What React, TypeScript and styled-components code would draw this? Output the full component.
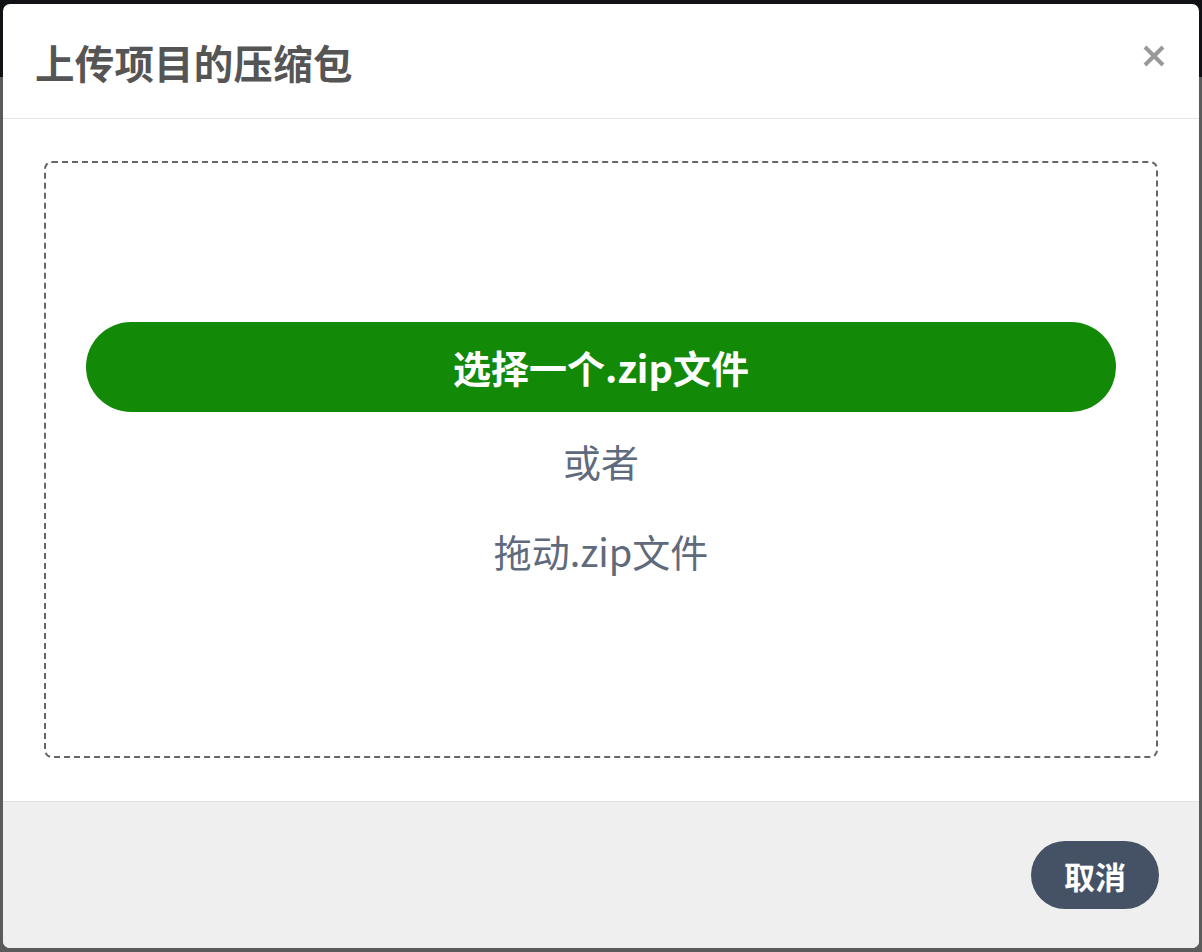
import React from 'react'
import styled, { createGlobalStyle } from 'styled-components';

const GlobalStyle = createGlobalStyle`
  html, body {
    margin: 0;
    padding: 0;
    height: 100%;
    overflow: hidden;
  }
  body {
    font-family: "Noto Sans CJK SC", "Noto Sans", sans-serif;
    background: #5b5b5b;
  }
`;

const Page = styled.div`
  position: relative;
  height: 952px;
  display: flex;
  flex-direction: column;
`;

const NavBar = styled.div`
  height: 77px;
  background: #101216;
`;

const PageRest = styled.div`
  flex: 1;
  background: #5b5b5b;
`;

const Overlay = styled.div`
  position: absolute;
  inset: 0;
  padding: 4px 3px;
  display: flex;
`;

const Modal = styled.div`
  flex: 1;
  display: flex;
  flex-direction: column;
  background: #ffffff;
  border-radius: 7px;
  overflow: hidden;
`;

const Header = styled.div`
  height: 114px;
  border-bottom: 1px solid #e5e5e5;
  display: flex;
  align-items: center;
  justify-content: space-between;
  padding: 0 33px 0 32px;
`;

const Title = styled.h2`
  margin: 0;
  font-size: 39.5px;
  font-weight: 700;
  color: #555555;
  letter-spacing: 0.2px;
`;

const CloseButton = styled.button`
  border: none;
  background: none;
  padding: 0;
  width: 24px;
  height: 24px;
  display: flex;
  align-items: center;
  justify-content: center;
  cursor: pointer;
  margin-top: -10px;
`;

const Body = styled.div`
  flex: 1;
  padding: 42px 41px 43px 41px;
  display: flex;
`;

const DropZone = styled.div`
  flex: 1;
  border: 2px dashed #666666;
  border-radius: 8px;
  display: flex;
  flex-direction: column;
  align-items: stretch;
  justify-content: center;
  padding: 0 40px 20px 40px;
`;

const PickButton = styled.button`
  height: 90px;
  border: none;
  border-radius: 45px;
  background: #138908;
  color: #ffffff;
  font-family: "Noto Sans CJK SC", "Noto Sans", sans-serif;
  font-size: 38px;
  font-weight: 700;
  cursor: pointer;
`;

const Hint = styled.div<{ $top: number }>`
  margin-top: ${(p) => p.$top}px;
  text-align: center;
  font-size: 38px;
  color: #5f6a7c;
  line-height: 54px;
`;

const Footer = styled.div`
  height: 146px;
  border-top: 1px solid #e2e2e2;
  background: #efefef;
  display: flex;
  align-items: center;
  justify-content: flex-end;
  padding: 0 40px;
`;

const CancelButton = styled.button`
  height: 68px;
  padding: 0 33px;
  border: none;
  border-radius: 34px;
  background: #455266;
  color: #ffffff;
  font-family: "Noto Sans CJK SC", "Noto Sans", sans-serif;
  font-size: 31px;
  font-weight: 700;
  cursor: pointer;
`;

function CloseIcon() {
  return (
    <svg width="22" height="22" viewBox="0 0 22 22">
      <path d="M2 2 L20 20 M20 2 L2 20" stroke="#999999" strokeWidth="4" />
    </svg>
  );
}

export default function App() {
  return (
    <>
      <GlobalStyle />
      <Page>
        <NavBar />
        <PageRest />
        <Overlay>
          <Modal>
            <Header>
              <Title>上传项目的压缩包</Title>
              <CloseButton aria-label="close">
                <CloseIcon />
              </CloseButton>
            </Header>
            <Body>
              <DropZone>
                <PickButton>选择一个.zip文件</PickButton>
                <Hint $top={22}>或者</Hint>
                <Hint $top={36}>拖动.zip文件</Hint>
              </DropZone>
            </Body>
            <Footer>
              <CancelButton>取消</CancelButton>
            </Footer>
          </Modal>
        </Overlay>
      </Page>
    </>
  );
}
